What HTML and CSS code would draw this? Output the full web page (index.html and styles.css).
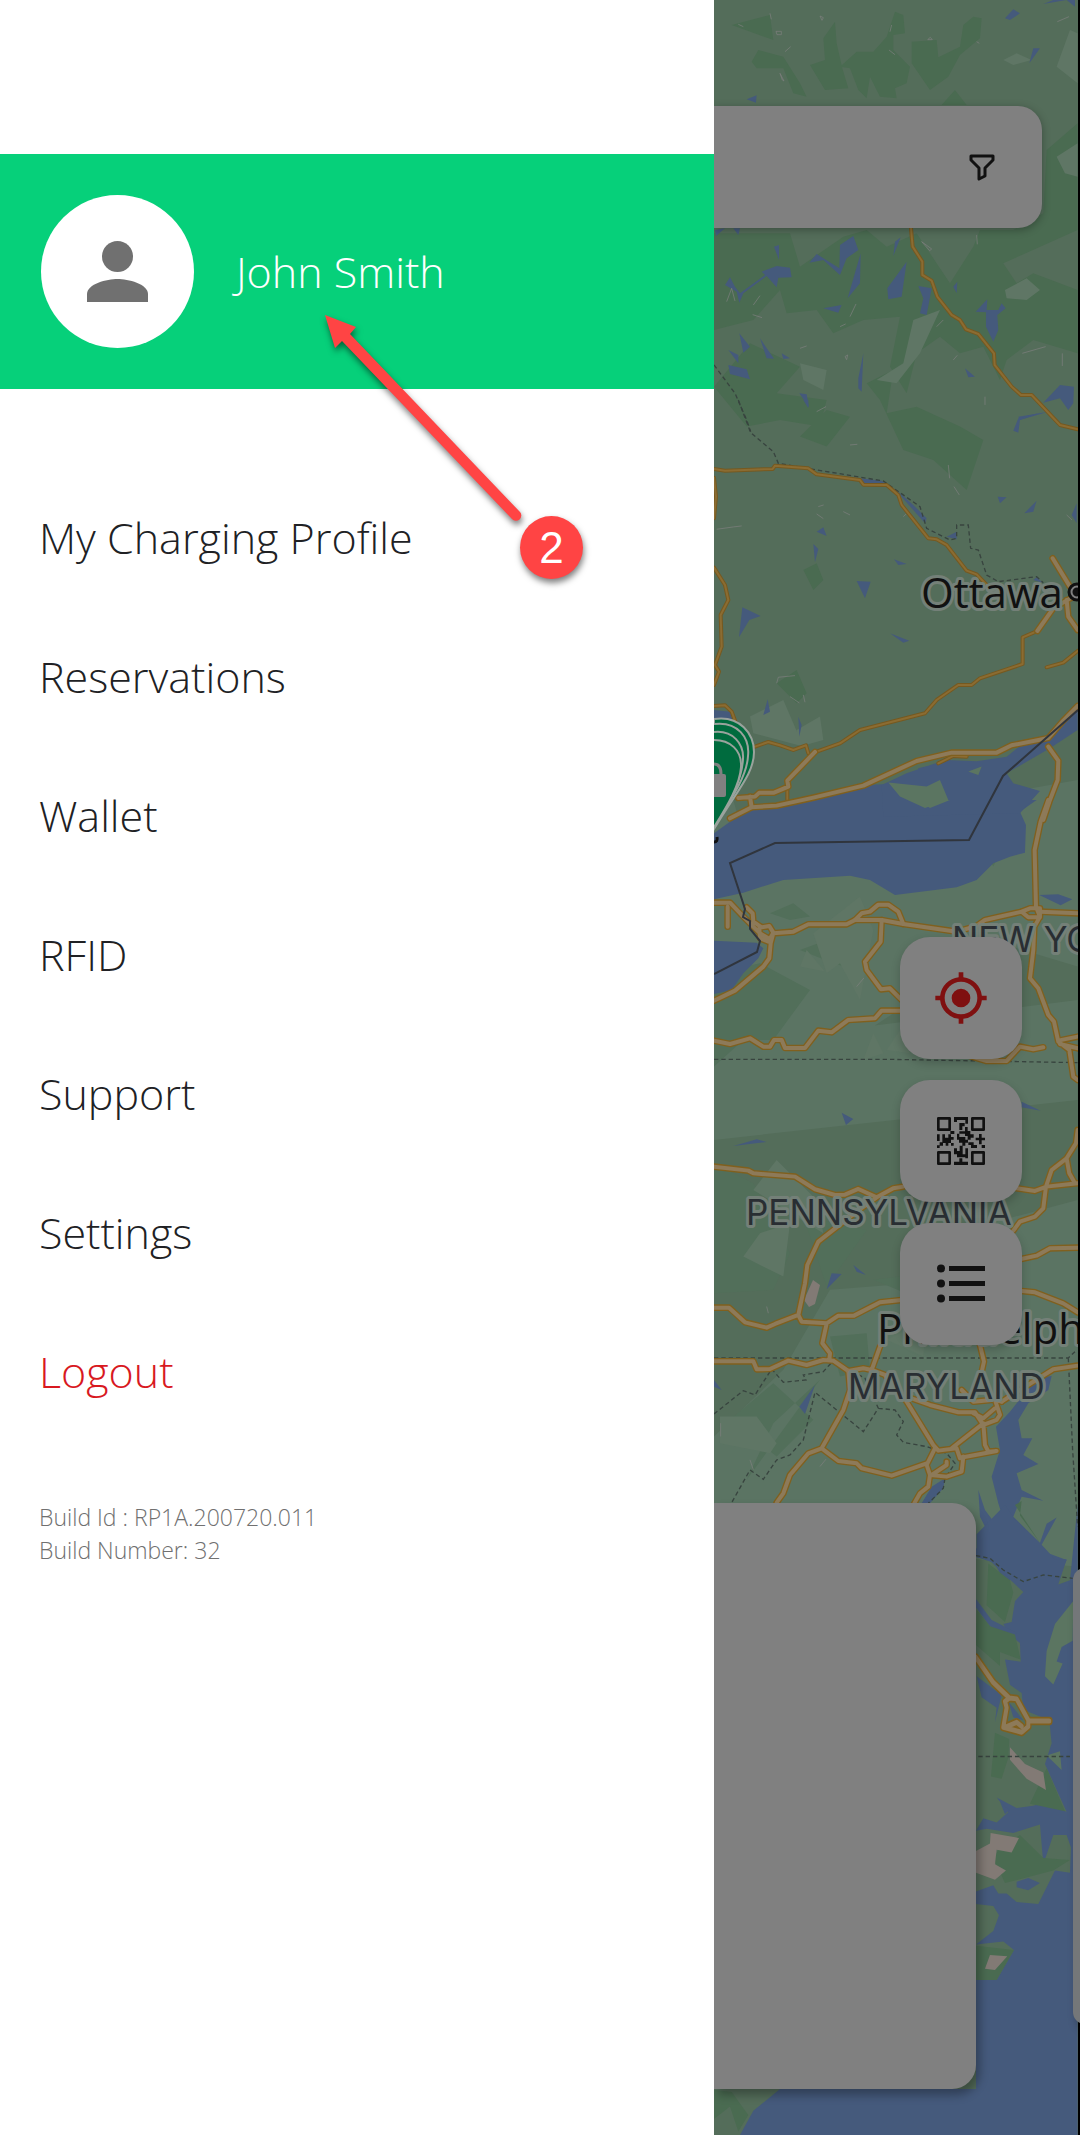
FILE: index.html
```html
<!DOCTYPE html>
<html lang="en">
<head>
<meta charset="utf-8">
<meta name="viewport" content="width=device-width, initial-scale=1">
<title>Account menu</title>
<link rel="stylesheet" href="styles.css">
</head>
<body>
<div class="screen">
  <aside class="drawer">
    <header class="profile">
      <span class="avatar">
        <svg viewBox="0 0 61 61" aria-hidden="true"><circle cx="30.500" cy="15.500" r="15.500"/><path d="M0 61V53C0 43 20 38 30.500 38S61 43 61 53V61Z"/></svg>
      </span>
      <a class="name" href="#profile">John Smith</a>
    </header>
    <nav class="menu">
      <a href="#charging">My Charging Profile</a>
      <a href="#reservations">Reservations</a>
      <a href="#wallet">Wallet</a>
      <a href="#rfid">RFID</a>
      <a href="#support">Support</a>
      <a href="#settings">Settings</a>
      <a class="logout" href="#logout">Logout</a>
    </nav>
    <footer class="build">
      <div>Build Id : RP1A.200720.011</div>
      <div>Build Number: 32</div>
    </footer>
    <svg class="arrow" viewBox="0 0 210 220" aria-hidden="true"><path d="M10 10 41 22 35 29 205 207A5 5 0 0 1 197 214L27 36 20 43Z"/></svg>
    <span class="step">2</span>
  </aside>

  <main class="map">
    <svg class="terrain" viewBox="714 0 366 2135" preserveAspectRatio="xMinYMin slice" aria-hidden="true">
      <defs>
        <g id="highways">
          <g transform="translate(700 400) scale(.3333)">
            <path d="M90 1255 155 1222 230 1217 340 1193 490 1157 650 1083 755 1058 890 1058 935 1036 1045 1014 1090 962 1133 918"/>
            <path d="M115 1194 165 1190 178 1178 222 1178 265 1160 262 1142 345 1056M150 1190 155 1222M1058 475 1110 560M1012 693 1060 625 1120 590M1100 600 1105 650 1133 690M1045 1040 1075 1082 1073 1140 1050 1200 1030 1260"/>
          </g>
          <g transform="translate(700 800) scale(.3333)">
            <path d="M1045 0 1022 65 1004 150 1008 320 1020 350 1003 380 1000 450 990 535 1015 565 1045 645 1062 665 1075 725 1108 750 1120 830 1133 840M1075 722 1133 710M1080 732 1133 745M965 335 985 352 1020 352 1020 325 990 325 965 335 855 360 830 378 770 395 610 372 545 360 465 360 440 373 325 373 280 395 220 400 212 430 208 475 190 500 105 572 42 602"/>
            <path d="M42 308H90L125 345 180 400 205 415M83 320V380M140 322 158 340 160 365 185 382 208 378 220 398 205 425 180 415 178 385M465 360 485 340 510 335 535 314H565L595 335 610 372M545 360 542 425 495 485 500 510 543 568 570 565 605 600M42 722 90 732 150 715 190 740H210L222 720H245L255 744H315L355 692 395 697 445 660 525 655 545 632H605M800 765 860 783H920L960 740 1000 748 1030 742M1020 335 1133 340"/>
            <path d="M42 1100 145 1112 160 1120 285 1130 345 1168 405 1185 435 1184 475 1167 530 1192 580 1165 610 1160M950 1165 1005 1173 1040 1160 1133 1150M1038 1160 1055 1110 1100 1075 1128 1030 1133 990M1100 1075 1108 1120 1125 1150M1038 1160 1030 1225 1005 1250 960 1265 940 1292"/>
          </g>
          <g transform="translate(700 1160) scale(.3333)">
            <path d="M530 112 470 155 355 245 322 315 315 370 295 465 305 485 380 490 415 467 462 467 540 427 605 420M42 443H87L135 487 200 503 225 492 295 465M380 490 367 550 390 580 388 600M42 604H160L170 628 210 627 265 602 320 615 370 600 400 602 445 633 490 625 515 630 540 560M960 298 1010 287 1050 265 1133 263M965 393 1005 397 1090 430 1133 457M840 555 852 605 842 650M905 725 960 690 1060 628 1133 617"/>
            <path d="M445 633 450 690 430 750 365 865 325 880 270 945 250 1000 230 1028M365 865 415 903 470 910 485 925 575 947 680 910M515 630 555 645 580 680 620 725 700 855 715 872 770 865 780 895 790 890 785 935 740 950 690 945 680 915 705 865M620 710 690 735 775 757 825 757 850 795 890 780 900 765 885 720 905 725M850 790 755 865M850 790 855 855 865 875 890 873 790 892M690 945 685 980 660 1000 643 1030M695 945 740 915 740 905M785 690 820 725 875 720M820 760 850 775 885 745"/>
          </g>
          <g transform="translate(700 1480) scale(.3333 .4177)">
            <path d="M828 425 880 485 928 522 950 524 985 575 985 590 965 604 910 592 920 545 915 530 928 522M985 577H1048M915 592 950 580 965 590"/>
          </g>
        </g>
        <g id="roads">
          <g transform="translate(700 0) scale(.3333)"><path d="M633 684 638 740 667 785V825L695 842 712 890 755 945 780 960 798 988 835 1002 882 1060 884 1095 935 1160 963 1185H995L1080 1275 1133 1288"/></g>
          <g transform="translate(700 400) scale(.3333)"><path d="M42 207 75 212 218 207 225 197 325 205 350 223 480 240 490 254 560 255 595 285 605 315 685 415 710 418 740 435 800 512 830 523 860 555M42 233 48 290 42 355M42 503 75 555 85 600 62 645 65 740 45 795 57 815 42 855M42 918 75 916 95 935 108 970M165 1040 205 1026 240 1036 280 1050 318 1036 325 1060M350 1055 420 1030 480 990 675 940 710 900 775 855H815L840 835 968 792V712L1012 693M1040 802 1090 788 1133 753M262 1160V1200M715 1090 760 1068 800 1070"/></g>
        </g>
      </defs>
      <rect class="land" x="714" width="366" height="2135"/>
      <g class="lowland" transform="translate(700 0) scale(.3333)">
        <path d="M42 2210 160 2600 520 2450 1133 2340V2900L900 2830 520 3080 42 3150ZM42 3090 500 3080 1133 3000V3300L42 3420ZM42 4310 250 4110 390 3870 640 3850 760 3700 1133 3600V4700L42 4620Z"/>
      </g>
      <g class="forest" transform="translate(700 0) scale(.3333)">
        <path d="M95 75 210 45 220 120ZM155 185 175 150 250 170 300 250 320 290 280 280 250 205 170 205ZM405 65 410 130 427 205 445 265 375 270 330 195 375 180 370 115ZM420 200 470 155 520 155 560 110 585 35 610 45 615 100 580 105 580 150 630 200 620 250 585 265 590 295 540 290 510 230 500 295 475 270 450 205ZM635 125 710 120 715 172 780 140 790 75 820 50 845 55 840 115 780 165 745 230 690 270 635 190ZM725 315 765 270 800 315Z"/>
        <path d="M1133 370 1040 450 1030 640 940 690H840L820 740 750 850 650 700 560 740 500 690 430 710 300 800 270 700H42V990L160 960 240 870 260 940 350 930 400 1000 490 960 600 950 570 1100 620 1180 650 1060 720 1010 780 1060 850 1040 900 1140 920 1080 1000 1020 1133 1060V870L1000 820 950 850 910 790 1133 690ZM42 1160 150 1030 300 1100 230 1180 380 1200 360 1280 240 1260 140 1280ZM500 1150 580 1110 560 1240 650 1220 780 1280 850 1320 800 1470 700 1380 610 1350 540 1200ZM300 1310 380 1230 450 1250 380 1340ZM310 1710 350 1690 370 1740 340 1770ZM230 2050 290 2010 320 2080 290 2110Z"/>
      </g>
      <g class="woods" transform="translate(700 0) scale(.3333)">
        <path d="M850 2550 890 2510 920 2520 880 2600ZM210 2740 280 2710 330 2750 270 2760ZM42 2920 180 2890 330 2970 220 3120H130L42 3200ZM300 2850 410 2810 470 2910 400 2890ZM610 2900 720 2840 740 2910 680 2990ZM42 3490 160 3550 270 3760 220 3870 42 3880ZM310 3650 500 3690 380 3860ZM90 4260 220 4150 340 4260 230 4370ZM390 4010 500 4000 510 4110 420 4130ZM520 3840 760 3810 830 3890 690 3910ZM140 4440 300 4220 360 4140 220 4270Z"/>
      </g>
      <g class="patches" transform="translate(700 0) scale(.3333)">
        <path d="M1070 200 1110 90 1133 100V250ZM1070 470 1133 430V530L1095 520ZM910 180 950 160 995 180 940 195ZM915 870 980 835 1020 870 980 900 920 895ZM300 1090 380 1110 370 1170 310 1140ZM530 1140 610 1090 640 960 720 930 660 1060 590 1150ZM150 2150 250 2100 310 2240 160 2200ZM290 2190 360 2150 370 2220 300 2240ZM520 2790 480 2690 340 2800 380 2920 420 2890 480 3000ZM300 2900 320 2850 375 2915ZM520 3100 550 3160 490 3180ZM560 3150 600 3090 630 3160ZM230 3480 160 3570 370 3700 350 3600ZM60 4250 170 4250 230 4330 210 4360 60 4330ZM180 3700 270 3670 250 3830 130 3770ZM560 4020 680 3960 670 4070Z"/>
      </g>
      <g class="water">
        <path transform="translate(700 0) scale(.3333)" d="M140 298 170 286 168 308ZM915 55 940 28 960 40 930 60ZM988 190 1000 145H1020ZM1030 12 1060 0H1125V20L1100 0ZM48 708 45 690 75 685ZM100 685H120L115 705ZM328 788 350 762 418 805 420 735 460 708 475 750 440 775 420 825 370 780ZM443 895 482 760 480 850ZM75 855 90 832 105 860 120 880 195 825 185 815 230 798 270 803 275 832 235 833 230 862 200 828 130 880 118 908 110 875ZM562 865 620 785 605 890 565 898ZM655 858 695 865 680 945 660 940 670 895ZM580 768 585 725 602 712ZM760 860 772 845 770 880ZM827 935 862 898 860 930 895 930 905 910 917 925 892 945 895 990 880 1025 858 980V937ZM370 925 425 915 415 938ZM118 1000 150 1040 130 1058ZM180 1015 222 1076 200 1075ZM85 1050 115 1065V1090ZM85 1095 140 1108 150 1138 90 1122ZM245 1060 270 1075 250 1077ZM475 1135 490 1060 485 1175 475 1165ZM298 1180 320 1183 327 1222ZM795 1105 825 1130 805 1132ZM1030 1208 1080 1155 1122 1160 1120 1210 1105 1230 1080 1195ZM955 1250 1045 1235 960 1260ZM222 740 237 735V780Z"/>
        <path transform="translate(700 400) scale(.3333)" d="M310 0H325V25ZM955 55 1020 38 960 60 955 98 940 92ZM480 235 545 242 600 280 640 315 680 355 675 370 600 285 545 250 490 250ZM740 410 770 395V418ZM350 395 370 382 380 408ZM340 432 355 447 345 487ZM582 478 620 492 595 495ZM660 507 750 530ZM470 543 512 545 495 595ZM127 622 182 648 148 660 117 712ZM570 700 628 722 610 728ZM893 290 920 292 900 310ZM973 340 1010 302 1000 335ZM1115 345 1130 310V370ZM42 930 90 935 100 970 42 980ZM190 945 203 898 210 935ZM295 950 305 975 298 1010ZM1010 532 1028 548 1000 540Z"/>
        <path transform="translate(700 800) scale(.3333)" d="M42 100 90 65 155 25 260 5 500 -45 565 -48 600 0H1010L960 35 978 75 975 158 930 170 880 190 830 240 770 262 585 285 510 240 450 227 250 240 130 278 42 298Z"/>
        <path transform="translate(700 400) scale(.3333)" d="M545 1155 620 1120 700 1092 740 1080 830 1084 920 1070 970 1030 1040 1015 1133 925V990L1050 1045 920 1120 940 1150 1020 1173 960 1240 550 1250ZM645 1130 655 1105 720 1088 740 1092 730 1128 715 1108Z"/>
        <path transform="translate(700 800) scale(.3333)" d="M42 422 170 428 190 445 175 475 130 520 95 570 42 582ZM1018 285 1075 283 1117 298 1082 316ZM425 938 460 957 438 975ZM100 1038 170 1018 200 1026ZM965 905 1022 932 965 922Z"/>
        <path transform="translate(700 1160) scale(.3333)" d="M380 388 395 340 425 342ZM460 315 498 345 470 335ZM298 740 345 675 315 762ZM42 660 65 690 42 680ZM1010 655 1055 648 1045 690 985 730 955 780 965 835 997 835 970 885 1015 912 950 940 965 990 1030 1022 965 1010 940 1070 1000 1130 1045 1180 1100 1200 1075 1260H910L885 1210 828 1190 828 1165 920 1200 880 1150 840 1070 835 990 855 1050 900 1110 920 1110 895 1030 875 950 900 870 888 800 930 755ZM665 1030 695 980 735 955 730 985 690 1030Z"/>
        <path transform="translate(700 1480) scale(.3333 .4177)" d="M42 1568H1133V60L1110 240 1075 250 1100 190H1065L1025 155 1070 90 1040 105 1020 150 940 90 915 60 830 130V185L865 190 970 268 945 290 935 340 910 345 935 375 960 390 962 435 915 430 930 490 965 510 970 550 1048 575 1055 630 1035 680 1100 795 1040 770 1000 780 950 785 890 760 925 795 890 820 850 810 828 840 860 835 940 845 1020 825 1030 920 1060 850 1100 850 1113 880 1110 940 1065 935 1015 1015 950 1010 920 990 895 990 880 970 828 985V1015L880 1020 897 1042 880 1080 828 1112 910 1105 942 1125 890 1197H828V1458H240L160 1510 120 1568Z"/>
      </g>
      <g class="islands" transform="translate(700 0) scale(.3333)">
        <path d="M565 2348 680 2360 720 2340 745 2400 675 2424 600 2390ZM805 2315 845 2300 835 2325ZM660 2405 750 2400 690 2424Z"/>
        <path transform="translate(0 4440) scale(1 1.253)" d="M1120 290 1065 345 1040 410 1035 470 1060 490 1088 440 1070 435 1085 400 1118 385ZM1040 660 1080 650 1085 695Z"/>
      </g>
      <g transform="translate(700 1480) scale(.3333 .4177)">
        <path class="water" d="M828 285 875 335 950 365 940 380 870 350 828 305ZM830 470 905 515 885 580 890 545 845 520ZM900 770 928 790 915 800ZM950 962 985 953 1020 965 985 982 950 975ZM980 908 1015 912 985 930ZM925 530 970 575 940 568Z"/>
        <path class="forest" d="M830 310 870 350 945 370 962 430 900 412V445L828 395ZM885 605 928 620 925 665 905 715 873 710ZM900 880 960 850 1030 905 1110 910 1060 935 915 965 880 905ZM1040 690 1095 793 990 775ZM828 1115 942 1125 890 1197H828ZM945 60 965 50 960 85 1020 150ZM865 200 930 240 940 270 915 340 860 300ZM42 1460 95 1465 145 1520 115 1560 90 1500 42 1530Z"/>
        <path class="urban" d="M930 640 975 680 1030 700 1038 742 980 715 930 670ZM872 845 957 857 935 892 890 885 885 920 918 935 885 957 828 940V888L870 870ZM870 1137 922 1140 885 1173 855 1170Z"/>
      </g>
      <path class="urban" d="m813 1280 7 5-5 19-6 3-5-7Z"/>
      <path class="specks" transform="translate(700 0) scale(.3333)" d="M228 94h16v10h-13ZM360 48l10 5-4 8ZM683 119l8-7 6 7ZM240 220l12 23-5-3ZM115 73l15 7M210 40l4 18M570 95l5-20M567 150l18 14M255 155l17-15M160 915l20-28M158 944l28 9M95 865l10 38M80 905l15-40M450 950l18-38M665 725l30 22-6 5ZM830 705l2 28M710 980l20-20M420 980l17-8M435 1070l8-5-3 14ZM760 1080l12-14M1087 1060v38M855 1190v25M967 1060l70-20M300 1045l20-7M350 1235l28-15M1072 65l35-15M830 125l8 5M50 1588l50-7 25-3M355 1520l16-5M350 1542l20 14M430 1535l20 10M745 1395l4 40M762 1460l16 25M1100 1545l16 15M230 2050l5-18 50-5M270 2090l28 19M310 2085l5 22M450 1335l22-2M610 1550l16-15M470 2960l22-26M150 4380l10 30M360 4400l18-22M62 4270v40M200 3920l5 20"/>
      <g class="counties">
        <path transform="translate(700 0) scale(.3333)" d="M42 1095 105 1180 140 1260 152 1295"/>
        <path transform="translate(700 400) scale(.3333)" d="M115 0 152 98 220 155 235 190 340 208 550 243 660 320 680 385 750 420 770 415V375H805L812 445 835 450 860 525 895 545 1010 530 1030 548"/>
        <path transform="translate(700 800) scale(.3333)" d="M42 778H560L1133 788"/>
        <path transform="translate(700 1160) scale(.3333)" d="M42 594H1105L1125 575M1105 594 1118 870 1133 1100M42 762 130 692 165 705 215 627 250 667 318 660 310 645 370 635 400 602 495 655 535 745 490 815 345 697 310 840 270 885 230 900 190 958 150 930 95 1028M535 745 585 750 610 785 590 825 610 847 680 860 740 880 765 910 735 955 730 985 685 1030M828 1187 870 1195 910 1230 970 1265 1030 1245 1118 1255"/>
        <path transform="translate(700 1480) scale(.3333 .4177)" d="M835 662H1110"/>
      </g>
      <use href="#roads" class="road-edge"/><use href="#roads" class="road"/>
      <use href="#highways" class="highway-edge"/><use href="#highways" class="highway"/>
      <path class="border" d="m1078 710-75 66-34 64-194 3-45 20 15 46-2 8 7 4v8l10 12-3 11-43 22"/>
      <g class="pins">
        <path d="M714 719c26-4 40 15 40 33 0 22-17 38-40 77Z"/>
        <path d="M714 724c24-3 36 14 34 32-1 20-16 42-34 70"/>
        <path d="M714 732c19-2 30 12 29 27-1 21-13 43-29 69"/>
        <path d="M714 740c16 0 28 10 27 27-1 17-13 38-27 60"/>
        <path class="lock" d="M714 774h10q2 0 2 2v19q0 2-2 2h-10Z"/><path class="shackle" d="M714 764q7 0 7 10"/>
        <path class="anchor" d="M714 842q4 0 3-5"/>
      </g>
      <g class="capital"><circle cx="1077" cy="592" r="8"/><circle cx="1077" cy="592" r="3"/></g>
      <g class="labels">
        <text class="city" x="921" y="608">Ottawa</text>
        <text class="city" x="877" y="1344">Philadelphia</text>
        <text class="state" x="952" y="952">NEW YORK</text>
        <text class="state" x="746" y="1225">PENNSYLVANIA</text>
        <text class="state" x="848" y="1399">MARYLAND</text>
      </g>
      <rect x="1078" width="2" height="2135"/>
    </svg>

    <div class="search">
      <button class="filter" aria-label="Filter"><svg viewBox="0 0 26 28" aria-hidden="true"><path d="M2 3H24V7L16 15V23L10 26V15L2 7Z"/></svg></button>
    </div>
    <div class="actions">
      <button aria-label="My location"><svg class="locate" viewBox="0 0 24 24" aria-hidden="true"><path d="M12 8a4 4 0 1 0 0 8 4 4 0 0 0 0-8Zm8.940 3A9 9 0 0 0 13 3.060V1h-2v2.060A9 9 0 0 0 3.060 11H1v2h2.060A9 9 0 0 0 11 20.940V23h2v-2.060A9 9 0 0 0 20.940 13H23v-2ZM12 19a7 7 0 1 1 0-14 7 7 0 0 1 0 14Z"/></svg></button>
      <button aria-label="Scan QR code"><svg class="qr" viewBox="0 0 144 144" aria-hidden="true">
        <path class="eyes" d="M4 4H38V38H4ZM106 4H140V38H106ZM4 106H38V140H4ZM106 106H140V140H106Z"/>
        <path d="M51 0H93V20H85V9H60V15H51ZM67 18H83V28H76V39H67ZM84 30H92V42H100V52H110V62H101V68H92V57H84V50H67V43H84ZM40 42H52V51H40ZM0 52H8V72H0ZM16 52H24V62H34V52H42V60H50V68H42V78H34V86H26V78H18V86H8V76H16ZM67 60H85V68H93V77H85V86H76V77H66V68H60V50H67ZM126 51H134V62H144V70H134V82H126V70H116V62H126ZM0 85H8V93H0ZM42 78H50V86H42ZM94 76H110V84H120V93H102V84H94ZM134 84H144V93H134ZM51 94H60V102H68V86H77V112H85V94H93V124H85V121H60V112H51ZM51 134H67V124H76V134H93V144H51Z"/>
      </svg></button>
      <button aria-label="Station list"><svg class="list" viewBox="0 0 48 48" aria-hidden="true"><path d="M12 6H48V11H12ZM12 21H48V26H12ZM12 36H48V41H12Z"/><circle cx="4" cy="8.500" r="4"/><circle cx="4" cy="23.500" r="4"/><circle cx="4" cy="38.500" r="4"/></svg></button>
    </div>
    <div class="stations"><article class="card"></article><article class="card next"></article></div>
  </main>
</div>
</body>
</html>
```
FILE: styles.css
```css
* { box-sizing: border-box; }

body {
  margin: 0;
  font-family: "Open Sans", "Noto Sans", sans-serif;
  font-weight: 350;
  font-variant-ligatures: none;
  color: #202124;
  background: #fff;
}

a { color: inherit; text-decoration: none; }

button { border: 0; padding: 0; background: none; }

svg { display: block; }

.screen {
  display: grid;
  grid-template-columns: minmax(0, 714fr) minmax(0, 366fr);
  min-height: 100vh;
}

/* Drawer */
.drawer { position: relative; padding-top: 154px; background: #fff; }

.profile {
  display: flex;
  align-items: center;
  gap: 42px;
  height: 235px;
  padding: 0 41px;
  background: #06d07a;
}

.avatar {
  display: grid;
  place-items: center;
  width: 153px;
  height: 153px;
  border-radius: 50%;
  background: #fff;
}

.avatar svg { width: 61px; fill: #707070; }

.name { font-size: 43px; color: #fff; }

.menu { display: flex; flex-direction: column; padding: 79px 39px 0; }

.menu a { font-size: 43px; line-height: 139px; }

.menu .logout { color: #d8191f; }

.build { padding: 60px 39px 0; font-size: 23px; line-height: 33px; color: #707070; }

/* Callout over the drawer */
.arrow {
  position: absolute;
  left: 315px;
  top: 305px;
  width: 210px;
  fill: #ff4444;
  filter: drop-shadow(1px 4px 3px rgba(0, 0, 0, .5));
}

.step {
  position: absolute;
  left: 520px;
  top: 516px;
  width: 63px;
  height: 63px;
  border-radius: 50%;
  background: #ff4444;
  box-shadow: 1px 4px 6px rgba(0, 0, 0, .5);
  color: #fff;
  font: 400 44px/63px "Liberation Sans", sans-serif;
  text-align: center;
}

/* Map */
.map {
  position: relative;
  display: flex;
  flex-direction: column;
  padding: 106px 0 46px;
  overflow: hidden;
  background: #546d5a;
}

.terrain { position: absolute; inset: 0; width: 100%; height: 100%; }

.land { fill: #546d5a; }
.lowland { fill: #5b7463; }
.forest { fill: #4a6b51; }
.woods { fill: #526f5a; }
.patches { fill: #5f7665; }
.water { fill: #455a7c; }
.islands { fill: #5b7561; }
.urban { fill: #827a75; }
.specks { fill: #808080; stroke: #808080; stroke-width: 2; fill-opacity: 0; }
.counties { fill: none; stroke: #38443f; stroke-width: 4; stroke-dasharray: 13 9; }
.border { fill: none; stroke: #30353d; stroke-width: 2; }

.road-edge, .road, .highway-edge, .highway { fill: none; stroke-linejoin: round; stroke-linecap: round; }
.road-edge { stroke: #765920; stroke-width: 12; }
.road { stroke: #8b6c32; stroke-width: 6; }
.highway-edge { stroke: #80601e; stroke-width: 20; }
.highway { stroke: #8d7a59; stroke-width: 12; }

.pins { fill: #006b3e; stroke: #9aa39d; stroke-width: 2; }
.pins .lock { fill: #808080; stroke: none; }
.pins .shackle { fill: none; stroke: #808080; stroke-width: 3; }
.pins .anchor { fill: none; stroke: #111; stroke-width: 3; }

.capital { fill: #111; stroke: #111; stroke-width: 3; }
.capital circle:first-child { fill: #808080; }

.labels { paint-order: stroke; stroke: #748078; stroke-width: 6; stroke-linejoin: round; }
.city { font: 500 42px "Open Sans", sans-serif; fill: #111; }
.state { font: 400 35px Inter, sans-serif; fill: #292e33; }

.search {
  position: relative;
  display: flex;
  justify-content: flex-end;
  align-items: center;
  height: 122px;
  margin-right: 38px;
  padding-right: 47px;
  border-radius: 0 24px 24px 0;
  background: #808080;
  box-shadow: 0 2px 8px rgba(0, 0, 0, .3);
}

.filter svg { width: 26px; fill: none; stroke: #111; stroke-width: 3; stroke-linejoin: round; }

.actions {
  position: relative;
  display: flex;
  flex-direction: column;
  align-items: flex-end;
  gap: 21px;
  margin: auto 58px 158px 0;
}

.actions button {
  display: grid;
  place-items: center;
  width: 122px;
  height: 122px;
  border-radius: 30px;
  background: #808080;
  box-shadow: 0 4px 10px rgba(0, 0, 0, .2);
}

.locate { width: 56px; fill: #7f1010; }
.qr, .list { width: 48px; fill: #111; }
.eyes { fill: none; stroke: #111; stroke-width: 8; stroke-linejoin: round; }

.stations { position: relative; display: flex; align-items: center; gap: 97px; }

.card {
  flex: 0 0 262px;
  height: 586px;
  border-radius: 0 24px 24px 0;
  background: #808080;
  box-shadow: 4px 6px 10px rgba(0, 0, 0, .3);
}

.next { height: 456px; border-radius: 12px; background: #747779; }
```
